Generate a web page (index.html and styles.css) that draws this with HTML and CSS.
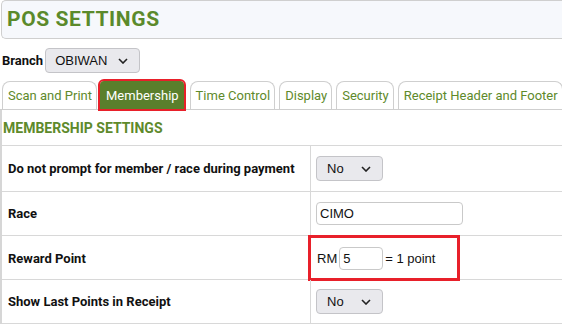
FILE: index.html
```html
<!DOCTYPE html>
<html lang="en">
<head>
  <meta charset="UTF-8">
  <title>POS Settings</title>
  <link rel="stylesheet" href="styles.css">
</head>
<body>

  <div class="page-header">
    <h1>POS SETTINGS</h1>
  </div>

  <div class="branch-row">
    <label for="branch">Branch</label>
    <div class="select-box branch-select">
      <span>OBIWAN</span>
      <svg width="10" height="6" viewBox="0 0 10 6"><path d="M1 1l4 4 4-4" fill="none" stroke="#222" stroke-width="1.6"/></svg>
    </div>
  </div>

  <div class="tabs">
    <div class="tab">Scan and Print</div>
    <div class="tab active">Membership</div>
    <div class="tab">Time Control</div>
    <div class="tab">Display</div>
    <div class="tab">Security</div>
    <div class="tab">Receipt Header and Footer</div>
  </div>

  <div class="panel">
    <h3>MEMBERSHIP SETTINGS</h3>

    <div class="settings">
      <div class="setting-row tall">
        <div class="setting-label">Do not prompt for member / race during payment</div>
        <div class="setting-value">
          <div class="select-box small-select">
            <span>No</span>
            <svg width="10" height="6" viewBox="0 0 10 6"><path d="M1 1l4 4 4-4" fill="none" stroke="#222" stroke-width="1.6"/></svg>
          </div>
        </div>
      </div>
      <div class="setting-row">
        <div class="setting-label">Race</div>
        <div class="setting-value"><div class="text-input race-input">CIMO</div></div>
      </div>
      <div class="setting-row">
        <div class="setting-label">Reward Point</div>
        <div class="setting-value">
          <div class="reward-box">
            <span>RM</span>
            <div class="text-input point-input">5</div>
            <span>= 1 point</span>
          </div>
        </div>
      </div>
      <div class="setting-row">
        <div class="setting-label">Show Last Points in Receipt</div>
        <div class="setting-value">
          <div class="select-box small-select">
            <span>No</span>
            <svg width="10" height="6" viewBox="0 0 10 6"><path d="M1 1l4 4 4-4" fill="none" stroke="#222" stroke-width="1.6"/></svg>
          </div>
        </div>
      </div>
    </div>
  </div>

</body>
</html>
```

FILE: styles.css
```css
body {
  margin: 0;
  font-family: Roboto, "Liberation Sans", sans-serif;
  color: #111;
  background: #fff;
  overflow: hidden;
}

.page-header {
  margin-left: 1px;
  height: 37px;
  background: #f6f8fc;
  border: 1px solid #cfcfcf;
  border-right: none;
  border-radius: 5px 0 0 5px;
  padding-left: 5px;
}

.page-header h1 {
  margin: 0;
  font-size: 21px;
  letter-spacing: 0.6px;
  line-height: 37px;
  color: #5b8a2b;
}

.branch-row {
  display: flex;
  align-items: center;
  gap: 2px;
  margin-top: 9px;
  padding-left: 2px;
  font-size: 13px;
  font-weight: bold;
}

.select-box {
  display: flex;
  align-items: center;
  justify-content: space-between;
  box-sizing: border-box;
  background: #e9e9ed;
  border: 1px solid #c4c4c8;
  border-radius: 4px;
  font-family: "Liberation Sans", Arial, sans-serif;
  font-size: 13px;
  font-weight: normal;
  color: #111;
}

.branch-select {
  width: 95px;
  height: 25px;
  padding: 0 11px 0 9px;
}

.small-select {
  width: 67px;
  height: 25px;
  padding: 0 11px 0 10px;
}

.tabs {
  display: flex;
  align-items: flex-end;
  margin-top: 8px;
  padding-left: 2px;
  border-bottom: 1px solid #cfcfcf;
}

.tab {
  flex-shrink: 0;
  white-space: nowrap;
  height: 27px;
  line-height: 27px;
  padding: 0 4px 0 5px;
  margin-right: 4px;
  border: 1px solid #cfcfcf;
  border-bottom: none;
  border-radius: 8px 8px 0 0;
  font-size: 13px;
  color: #5e8a2b;
}

.tab:first-child {
  margin-right: 3px;
}

.tab.active {
  background: #5a7f2c;
  color: #fff;
  border-color: #5a7f2c;
  border-radius: 4px 4px 0 0;
  outline: 2px solid #e8202a;
  margin-right: 6px;
}

.panel {
  border-left: 2px solid #d6d6d6;
}

.panel h3 {
  margin: 0;
  padding: 10px 0 9px 1px;
  font-size: 14px;
  color: #5e8a2b;
}

.settings {
  border-top: 1px solid #d8d8d8;
}

.setting-row {
  display: grid;
  grid-template-columns: 309px 1fr;
  box-sizing: border-box;
  height: 44px;
  border-bottom: 1px solid #d8d8d8;
}

.setting-row.tall {
  height: 46px;
}

.setting-label {
  display: flex;
  align-items: center;
  padding-left: 6px;
  border-right: 1px solid #d8d8d8;
  font-size: 13px;
  font-weight: bold;
}

.setting-value {
  display: flex;
  align-items: center;
  padding-left: 5px;
  font-family: "Liberation Sans", Arial, sans-serif;
  font-size: 13px;
}

.text-input {
  box-sizing: border-box;
  height: 23px;
  line-height: 21px;
  border: 1px solid #c9c9c9;
  border-radius: 4px;
  padding: 0 3px;
  background: #fff;
}

.race-input {
  width: 147px;
}

.reward-box {
  display: flex;
  align-items: center;
  gap: 2px;
  align-self: flex-start;
  box-sizing: border-box;
  width: 152px;
  height: 46px;
  margin: -1px 0 0 -8px;
  padding-left: 6px;
  border: 3px solid #e8202a;
}

.point-input {
  width: 44px;
  flex-shrink: 0;
}
```
